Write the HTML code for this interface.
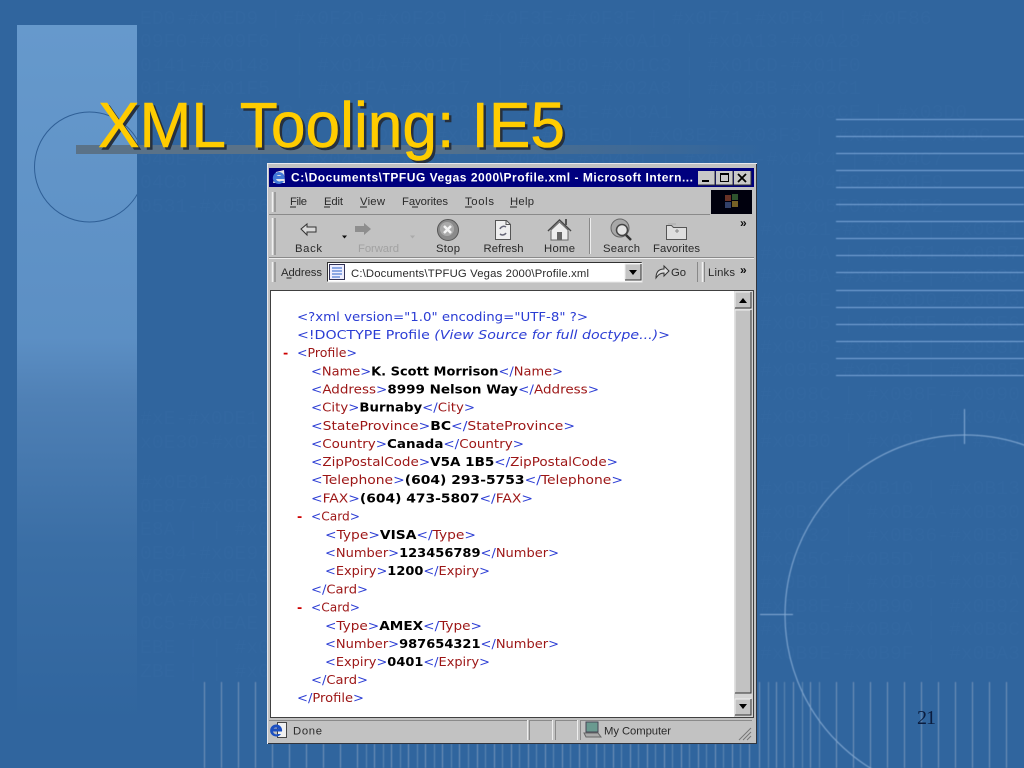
<!DOCTYPE html>
<html><head><meta charset="utf-8"><title>XML Tooling: IE5</title>
<style>
html,body{margin:0;padding:0;width:1024px;height:768px;overflow:hidden;background:#30659e}
svg{display:block}
.u{font-family:"Liberation Sans",sans-serif;font-size:11.3px;fill:#2a2a2a}
.x{font-family:"DejaVu Sans",sans-serif;font-size:12.6px;fill:#2c3cd4}
.x .r{fill:#9c1414}
.x .b{fill:#000;font-weight:bold}
.x .i{font-style:italic}
.bg{font-family:"Liberation Mono",monospace;font-size:19.7px;fill:#3a6fa8;opacity:.22}
</style></head><body>
<svg width="1024" height="768" viewBox="0 0 1024 768" xmlns="http://www.w3.org/2000/svg">
<defs>
<linearGradient id="col" x1="0" y1="0" x2="0" y2="1"><stop offset="0" stop-color="#6699cc"/><stop offset=".45" stop-color="#5c8fc4"/><stop offset=".54" stop-color="#4f80b5"/><stop offset=".75" stop-color="#3a6ea5"/><stop offset="1" stop-color="#30659e"/></linearGradient>
<linearGradient id="bar" x1="0" y1="0" x2="1" y2="0"><stop offset="0" stop-color="#5a7288"/><stop offset=".45" stop-color="#5a7288"/><stop offset="1" stop-color="#30659e"/></linearGradient>
<clipPath id="cc"><rect x="17" y="25" width="120" height="700"/></clipPath>
<filter id="soft" x="0" y="0" width="100%" height="100%"><feGaussianBlur stdDeviation=".35"/></filter>
<filter id="soft2" filterUnits="userSpaceOnUse" x="0" y="0" width="1024" height="768"><feGaussianBlur stdDeviation=".4"/></filter>
</defs>
<rect width="1024" height="768" fill="#30659e"/>
<g class="bg">
<text x="140" y="24">ED0-#x0ED9 | #x0F20-#x0F29 | #x0F3E-#x0F3F | #x0F71-#x0F84 | #x0F86</text>
<text x="140" y="47">09F0-#x09F6 &#160;| #x0A05-#x0A0A &#160;| #x0A0F-#x0A10 | #x0A13-#x0A28</text>
<text x="140" y="71">0141-#x0148 &#160;| #x014A-#x017E &#160;| #x0180-#x01C3 | #x01CD-#x01F0</text>
<text x="140" y="94">01F4-#x01F5 &#160;| #x01FA-#x0217 &#160;| #x0250-#x02A8 | #x02BB-#x02C1</text>
<text x="140" y="118">0386 | #x0388-#x038A | #x038C | #x038E-#x03A1 | #x03A3-#x03CE | #x03D0</text>
<text x="140" y="141">03D6 | #x03DA | #x03DC | #x03DE | #x03E0 | #x03E2-#x03F3 | #x0401-#x040C</text>
<text x="140" y="165">040E-#x044F | #x0451-#x045C | #x045E-#x0481 | #x0490-#x04C4 | #x04C7</text>
<text x="140" y="188">04C8 | #x04CB-#x04CC | #x04D0-#x04EB | #x04EE-#x04F5 | #x04F8-#x04F9</text>
<text x="140" y="212">0531-#x0556 | #x0559 | #x0561-#x0586 | #x05D0-#x05EA | #x05F0-#x05F2</text>
<text x="760" y="235">#x0621-#x063A | #x0641</text>
<text x="760" y="259">#x064A | #x0671-#x06B7</text>
<text x="760" y="282">#x06BA-#x06BE | #x06C0</text>
<text x="760" y="306">#x06CE | #x06D0-#x06D3</text>
<text x="760" y="329">#x06D5 | #x06E5-#x06E6</text>
<text x="760" y="353">#x0905-#x0939 | #x093D</text>
<text x="760" y="376">#x0958-#x0961 | #x0985</text>
<text x="760" y="400">#x098C | #x098F-#x0990</text>
<text x="760" y="423">#x0993-#x09A8 | #x09AA</text>
<text x="760" y="447">#x09B0 | #x09B2 | #x09B6</text>
<text x="760" y="494">#x0B0F-#x0B10 | #x0B13</text>
<text x="760" y="518">#x0B28 | #x0B2A-#x0B30</text>
<text x="760" y="541">#x0B32 | #x0B36-#x0B39</text>
<text x="760" y="565">#x0B5C-#x0B5D | #x0B5F</text>
<text x="760" y="588">#x0B61 | #x0B85-#x0B8A</text>
<text x="760" y="612">#x0B8E-#x0B90 | #x0B92</text>
<text x="760" y="635">#x0B99-#x0B9A | #x0B9C</text>
<text x="760" y="659">#x0B9E-#x0B9F | #x0BA3</text>
<text x="140" y="424">#xE-#x0DE1 | #x0E01</text><text x="140" y="448">x0E30-#x0E33 | #x0</text>
<text x="140" y="488">#x0E81-#x0E82 | #x</text><text x="140" y="512">0E87-#x0E88 | #x0E</text>
<text x="140" y="535">E8A | | #x0E8D</text><text x="140" y="559">0E94-#x0E97 | #x0E</text>
<text x="140" y="582">VB57-#x0EA3 | #x0E</text><text x="140" y="606">0CA-#x0EAB | #x0EA</text>
<text x="140" y="629">0C5-#x0EAE | #x0EB</text><text x="140" y="653">EBE | | #x0EC0</text>
<text x="140" y="677">ZBE | | #x0F40</text>
</g>
<rect x="17" y="25" width="120" height="695" fill="url(#col)"/>
<circle cx="89.500" cy="167" r="55" fill="none" stroke="#2f5f96" stroke-width="1" clip-path="url(#cc)"/>
<rect x="76" y="145" width="690" height="9" fill="url(#bar)"/>
<g filter="url(#soft2)">
<g fill="#7ba6d8">
<rect x="836" y="119" width="188" height="1"/><rect x="836" y="136" width="188" height="1"/><rect x="836" y="153" width="188" height="1"/><rect x="836" y="170" width="188" height="1"/><rect x="836" y="187" width="188" height="1"/><rect x="836" y="204" width="188" height="1"/><rect x="836" y="221" width="188" height="1"/><rect x="836" y="238" width="188" height="1"/><rect x="836" y="255" width="188" height="1"/><rect x="836" y="272" width="188" height="1"/><rect x="836" y="290" width="188" height="1"/><rect x="836" y="307" width="188" height="1"/><rect x="836" y="324" width="188" height="1"/><rect x="836" y="341" width="188" height="1"/><rect x="836" y="358" width="188" height="1"/><rect x="836" y="375" width="188" height="1"/>
</g>
<path d="M204.500 682V768M221.500 682V768M238.500 682V768M255.500 682V768M272.500 744V768M289.500 744V768M306.500 744V768M323.500 744V768M340.500 744V768M357.500 744V768M374.500 744V768M391.500 744V768M408.500 744V768M425.500 744V768M442.500 744V768M459.500 744V768M477.500 744V768M494.500 744V768M511.500 744V768M528.500 744V768M545.500 744V768M562.500 744V768M579.500 744V768M596.500 744V768M613.500 744V768M630.500 744V768M647.500 744V768M664.500 744V768M681.500 744V768M698.500 744V768M715.500 744V768M732.500 744V768M749.500 744V768M759.500 682V768M776.500 682V768M793.500 682V768M810.500 682V768M836.500 682V768M853.500 682V768M870.500 682V768M887.500 682V768M904.500 682V768M921.500 682V768M938.500 682V768M955.500 682V768M972.500 682V768M989.500 682V768M1006.500 682V768" stroke="#7494b8" stroke-width="1" fill="none"/>
<path d="M366.500 744V768M383.500 744V768M400.500 744V768M417.500 744V768M434.500 744V768M451.500 744V768M468.500 744V768M485.500 744V768M502.500 744V768M519.500 744V768M536.500 744V768M553.500 744V768M570.500 744V768M587.500 744V768M604.500 744V768M621.500 744V768M638.500 744V768M655.500 744V768M672.500 744V768M689.500 744V768M706.500 744V768M723.500 744V768M740.500 744V768M768.500 682V768M784.500 682V768M802.500 682V768M819.500 682V768" stroke="#5f87b0" stroke-width="1" fill="none"/>
<circle cx="965" cy="615" r="180" fill="none" stroke="#86abd4" stroke-width="1"/>
<path d="M964.500 409V444M760 614.500H793" stroke="#86abd4" stroke-width="1" fill="none"/>
</g>
<text x="917" y="724" font-family="'Liberation Serif',serif" font-size="20" fill="#0b1d3f" textLength="19">21</text>

<text x="98" y="147" font-family="'Liberation Sans',sans-serif" font-size="64" fill="#26303f" stroke="#26303f" stroke-width=".6" transform="translate(2.500 2.500)" textLength="467" lengthAdjust="spacingAndGlyphs">XML Tooling: IE5</text>
<text x="98" y="147" font-family="'Liberation Sans',sans-serif" font-size="64" fill="#ffcc00" stroke="#ffcc00" stroke-width=".6" textLength="467" lengthAdjust="spacingAndGlyphs">XML Tooling: IE5</text>

<g filter="url(#soft)">
<!-- frame -->
<rect x="267" y="163" width="490" height="581" fill="#c2c2c2"/>
<path d="M267.500 744V163.500H757" stroke="#e8e8ee" fill="none"/>
<path d="M756.500 164V743.500H268" stroke="#30343c" fill="none"/>
<!-- titlebar -->
<rect x="269" y="168" width="485" height="19" fill="#02027e"/>
<path d="M276 172l8-2 1 13h-12z" fill="#e4e4e8"/>
<path d="M284 175a6 6 0 1 0 0 6h-3a3.500 3.500 0 0 1-5-2h8.500a6 6 0 0 0-.5-4zm-7.500 1a3.500 3.500 0 0 1 5 0z" fill="#3f78d8"/>
<text x="291" y="181.500" font-family="'Liberation Sans',sans-serif" font-weight="bold" font-size="12" fill="#fff" textLength="402" lengthAdjust="spacing">C:\Documents\TPFUG Vegas 2000\Profile.xml - Microsoft Intern...</text>
<g>
<rect x="698" y="171" width="17" height="14" fill="#c8c8c8"/><rect x="716" y="171" width="17" height="14" fill="#c8c8c8"/><rect x="734" y="171" width="17" height="14" fill="#c8c8c8"/>
<path d="M698 185h17v-14M716 185h17v-14M734 185h17v-14" stroke="#333" fill="none"/>
<rect x="702" y="180" width="7" height="2" fill="#000"/>
<rect x="720.500" y="173.500" width="8" height="8" fill="none" stroke="#000"/><rect x="720" y="173" width="9" height="2" fill="#000"/>
<path d="M738 174l8 8M746 174l-8 8" stroke="#000" stroke-width="1.800"/>
</g>
<!-- menu -->
<path d="M272.500 192V212" stroke="#f0f0f0" stroke-width="1.500"/><path d="M275 192V212" stroke="#777"/>
<path d="M269 214.500H710" stroke="#8a8a8a"/>
<g class="u">
<text x="290" y="205" textLength="17">File</text><text x="324" y="205" textLength="19">Edit</text><text x="360" y="205" textLength="25">View</text><text x="402" y="205" textLength="46">Favorites</text><text x="465" y="205" textLength="29">Tools</text><text x="510" y="205" textLength="24">Help</text>
</g>
<path d="M290 207h6M324 207h6M360 207h7M412 207h6M465 207h7M510 207h7" stroke="#222"/>
<rect x="711" y="190" width="41" height="24" fill="#050508"/>
<g opacity=".75"><rect x="725" y="195" width="6" height="6" fill="#8a4030"/><rect x="732" y="194" width="6" height="6" fill="#3d6d3d"/><rect x="725" y="202" width="6" height="6" fill="#40558a"/><rect x="732" y="201" width="6" height="6" fill="#9a8030"/></g>
<!-- toolbar -->
<path d="M272.500 218V255" stroke="#f0f0f0" stroke-width="1.500"/><path d="M275 218V255" stroke="#777"/>
<path d="M269 257.500H754" stroke="#8a8a8a"/><path d="M269 258.500H754" stroke="#eee"/>
<!-- back -->
<path d="M301 229l6-5v3h9v5h-9v3z" fill="#d8d8d8" stroke="#333"/>
<path d="M342 235.500h5l-2.500 3z" fill="#111"/>
<!-- forward -->
<path d="M371 229l-7-6v3h-9v6h9v3z" fill="#8e8e8e"/>
<path d="M410 235.500h5l-2.500 3z" fill="#aaa"/>
<!-- stop -->
<circle cx="448" cy="230" r="10.500" fill="#8a8a8a" stroke="#555"/>
<circle cx="447" cy="229" r="7" fill="#aaa"/>
<path d="M444 226l7 7M451 226l-7 7" stroke="#f4f4f4" stroke-width="2.500"/>
<!-- refresh -->
<path d="M495.500 220.500h11l4 4v15h-15z" fill="#efefef" stroke="#555"/>
<path d="M506 220.500v4h4" fill="none" stroke="#555"/>
<path d="M500 229a4 4 0 0 1 6-2M506 233a4 4 0 0 1-6 1" fill="none" stroke="#667" stroke-width="1.500"/>
<!-- home -->
<path d="M548 231l11.500-11 11.500 11" fill="#e8e8e8" stroke="#444" stroke-width="1.500"/>
<path d="M551 230v10h17v-10l-8.500-8z" fill="#ededed" stroke="#666"/>
<rect x="557" y="232" width="5" height="8" fill="#666"/><rect x="565" y="219" width="2" height="6" fill="#555"/>
<!-- sep -->
<path d="M589.500 218V254" stroke="#888"/><path d="M590.500 218V254" stroke="#eee"/>
<!-- search -->
<circle cx="620" cy="228" r="9" fill="#a8a8a8" stroke="#666"/>
<circle cx="622" cy="230" r="5.500" fill="#e4e4e4" stroke="#444" stroke-width="1.500"/>
<path d="M626 235l5 5" stroke="#333" stroke-width="2.500"/>
<!-- favorites -->
<path d="M666.500 225.500h5l2 2h13v12h-20z" fill="#dedede" stroke="#555"/>
<path d="M668 224h8" stroke="#aaa"/>
<path d="M675 231h4M677 229v4" stroke="#888"/>
<g class="u">
<text x="295" y="252" textLength="27">Back</text>
<text x="358" y="252" textLength="41" style="fill:#a2a2a2">Forward</text>
<text x="436" y="252" textLength="24">Stop</text>
<text x="483.500" y="252" textLength="40">Refresh</text>
<text x="544" y="252" textLength="31">Home</text>
<text x="603" y="252" textLength="37">Search</text>
<text x="653" y="252" textLength="47">Favorites</text>
</g>
<text x="740" y="227" font-family="'Liberation Sans',sans-serif" font-weight="bold" font-size="12" fill="#111">»</text>
<!-- address -->
<path d="M272.500 262V282" stroke="#f0f0f0" stroke-width="1.500"/><path d="M275 262V282" stroke="#777"/>
<text class="u" x="281" y="276" textLength="41">Address</text>
<path d="M286.500 278h5" stroke="#222"/>
<rect x="327" y="262" width="315" height="20" fill="#fff"/>
<path d="M327.500 282V262.500H642" stroke="#333" fill="none"/>
<path d="M642 262.500V282H327" stroke="#e8e8e8" fill="none"/>
<rect x="329.500" y="264.500" width="15" height="15" fill="#eef" stroke="#335"/>
<path d="M332 268h10M332 271h10M332 274h10M332 277h8" stroke="#2a62c8"/>
<text class="u" x="351" y="277" textLength="238">C:\Documents\TPFUG Vegas 2000\Profile.xml</text>
<rect x="625" y="264" width="16" height="16" fill="#c4c4c4"/>
<path d="M625 264h16M625 264v16" stroke="#eee" fill="none"/><path d="M641 264v16h-16" stroke="#333" fill="none"/>
<path d="M629 270h8l-4 5z" fill="#000"/>
<path d="M656 278c0-6 3-9 8-9v-3l5 5-5 5v-3c-4 0-6 2-8 5z" fill="#ddd" stroke="#333"/>
<text class="u" x="671" y="276" textLength="15">Go</text>
<path d="M697.500 262V282" stroke="#888"/><path d="M702.500 262V282" stroke="#f0f0f0" stroke-width="1.500"/><path d="M704.500 262V282" stroke="#888"/>
<text class="u" x="708" y="276" textLength="27">Links</text>
<text x="740" y="274" font-family="'Liberation Sans',sans-serif" font-weight="bold" font-size="12" fill="#111">»</text>
<!-- client -->
<rect x="270" y="290" width="484" height="428" fill="#404040"/>
<rect x="271" y="291" width="482" height="426" fill="#fff"/>
<!-- scrollbar -->
<rect x="734" y="291" width="19" height="426" fill="#d4d4d4"/>
<rect x="735" y="292" width="16" height="16" fill="#c4c4c4"/>
<path d="M735 308v-16h16" stroke="#eee" fill="none"/><path d="M751 292v16h-16" stroke="#333" fill="none"/>
<path d="M739 303h8l-4-5z" fill="#000"/>
<rect x="735" y="310" width="16" height="383" fill="#c2c2c2"/>
<path d="M735 693v-383h16" stroke="#eee" fill="none"/><path d="M751 310v383h-16" stroke="#333" fill="none"/>
<rect x="735" y="699" width="16" height="16" fill="#c4c4c4"/>
<path d="M735 715v-16h16" stroke="#eee" fill="none"/><path d="M751 699v16h-16" stroke="#333" fill="none"/>
<path d="M739 704h8l-4 5z" fill="#000"/>
<!-- xml -->
<g class="x">
<text x="297" y="321" textLength="291" lengthAdjust="spacingAndGlyphs">&lt;?xml version="1.0" encoding="UTF-8" ?&gt;</text>
<text x="297" y="339" textLength="373" lengthAdjust="spacingAndGlyphs">&lt;!DOCTYPE Profile <tspan class="i">(View Source for full doctype...)</tspan>&gt;</text>
<text x="283" y="357" style="fill:#cc0000;font-weight:bold">-</text>
<text x="297" y="357" textLength="60" lengthAdjust="spacingAndGlyphs">&lt;<tspan class="r">Profile</tspan>&gt;</text>
<text x="311" y="375.500" textLength="252" lengthAdjust="spacingAndGlyphs">&lt;<tspan class="r">Name</tspan>&gt;<tspan class="b">K. Scott Morrison</tspan>&lt;/<tspan class="r">Name</tspan>&gt;</text>
<text x="311" y="393.500" textLength="288" lengthAdjust="spacingAndGlyphs">&lt;<tspan class="r">Address</tspan>&gt;<tspan class="b">8999 Nelson Way</tspan>&lt;/<tspan class="r">Address</tspan>&gt;</text>
<text x="311" y="411.500" textLength="164" lengthAdjust="spacingAndGlyphs">&lt;<tspan class="r">City</tspan>&gt;<tspan class="b">Burnaby</tspan>&lt;/<tspan class="r">City</tspan>&gt;</text>
<text x="311" y="430" textLength="264" lengthAdjust="spacingAndGlyphs">&lt;<tspan class="r">StateProvince</tspan>&gt;<tspan class="b">BC</tspan>&lt;/<tspan class="r">StateProvince</tspan>&gt;</text>
<text x="311" y="448" textLength="213" lengthAdjust="spacingAndGlyphs">&lt;<tspan class="r">Country</tspan>&gt;<tspan class="b">Canada</tspan>&lt;/<tspan class="r">Country</tspan>&gt;</text>
<text x="311" y="466" textLength="307" lengthAdjust="spacingAndGlyphs">&lt;<tspan class="r">ZipPostalCode</tspan>&gt;<tspan class="b">V5A 1B5</tspan>&lt;/<tspan class="r">ZipPostalCode</tspan>&gt;</text>
<text x="311" y="484" textLength="312" lengthAdjust="spacingAndGlyphs">&lt;<tspan class="r">Telephone</tspan>&gt;<tspan class="b">(604) 293-5753</tspan>&lt;/<tspan class="r">Telephone</tspan>&gt;</text>
<text x="311" y="502.500" textLength="222" lengthAdjust="spacingAndGlyphs">&lt;<tspan class="r">FAX</tspan>&gt;<tspan class="b">(604) 473-5807</tspan>&lt;/<tspan class="r">FAX</tspan>&gt;</text>
<text x="297" y="520.500" style="fill:#cc0000;font-weight:bold">-</text>
<text x="311" y="520.500" textLength="49" lengthAdjust="spacingAndGlyphs">&lt;<tspan class="r">Card</tspan>&gt;</text>
<text x="325" y="539" textLength="151" lengthAdjust="spacingAndGlyphs">&lt;<tspan class="r">Type</tspan>&gt;<tspan class="b">VISA</tspan>&lt;/<tspan class="r">Type</tspan>&gt;</text>
<text x="325" y="557" textLength="234" lengthAdjust="spacingAndGlyphs">&lt;<tspan class="r">Number</tspan>&gt;<tspan class="b">123456789</tspan>&lt;/<tspan class="r">Number</tspan>&gt;</text>
<text x="325" y="575" textLength="165" lengthAdjust="spacingAndGlyphs">&lt;<tspan class="r">Expiry</tspan>&gt;<tspan class="b">1200</tspan>&lt;/<tspan class="r">Expiry</tspan>&gt;</text>
<text x="311" y="593.500" textLength="57" lengthAdjust="spacingAndGlyphs">&lt;/<tspan class="r">Card</tspan>&gt;</text>
<text x="297" y="611.500" style="fill:#cc0000;font-weight:bold">-</text>
<text x="311" y="611.500" textLength="49" lengthAdjust="spacingAndGlyphs">&lt;<tspan class="r">Card</tspan>&gt;</text>
<text x="325" y="630" textLength="157" lengthAdjust="spacingAndGlyphs">&lt;<tspan class="r">Type</tspan>&gt;<tspan class="b">AMEX</tspan>&lt;/<tspan class="r">Type</tspan>&gt;</text>
<text x="325" y="648" textLength="234" lengthAdjust="spacingAndGlyphs">&lt;<tspan class="r">Number</tspan>&gt;<tspan class="b">987654321</tspan>&lt;/<tspan class="r">Number</tspan>&gt;</text>
<text x="325" y="666" textLength="165" lengthAdjust="spacingAndGlyphs">&lt;<tspan class="r">Expiry</tspan>&gt;<tspan class="b">0401</tspan>&lt;/<tspan class="r">Expiry</tspan>&gt;</text>
<text x="311" y="684" textLength="57" lengthAdjust="spacingAndGlyphs">&lt;/<tspan class="r">Card</tspan>&gt;</text>
<text x="297" y="702" textLength="67" lengthAdjust="spacingAndGlyphs">&lt;/<tspan class="r">Profile</tspan>&gt;</text>
</g>
<!-- status -->
<path d="M269 720.500H527M529 720.500H552M555 720.500H577M580 720.500H752" stroke="#8a8a8a"/>
<path d="M527.500 720V740M552.500 720V740M577.500 720V740" stroke="#eee"/>
<path d="M529.500 720V740M555.500 720V740M580.500 720V740" stroke="#8a8a8a"/>
<rect x="277.500" y="722.500" width="9" height="15" fill="#f0f0f0" stroke="#444"/>
<path d="M281 727a6 6 0 1 0 0 7h-3a3.500 3.500 0 0 1-5-2.500h9a6 6 0 0 0-1-4.500zm-7.500 1.500a3.500 3.500 0 0 1 5 0z" fill="#1a50c0"/>
<text class="u" x="293" y="734.500" textLength="29">Done</text>
<rect x="586" y="722" width="12" height="10" fill="#6a9a90" stroke="#445"/>
<path d="M584 733h14l3 4h-15z" fill="#aaa" stroke="#666"/>
<text class="u" x="604" y="734.500" textLength="67">My Computer</text>
<path d="M739 740l12-12M743 740l8-8M747 740l4-4" stroke="#777"/>
</g>
</svg>
</body></html>
